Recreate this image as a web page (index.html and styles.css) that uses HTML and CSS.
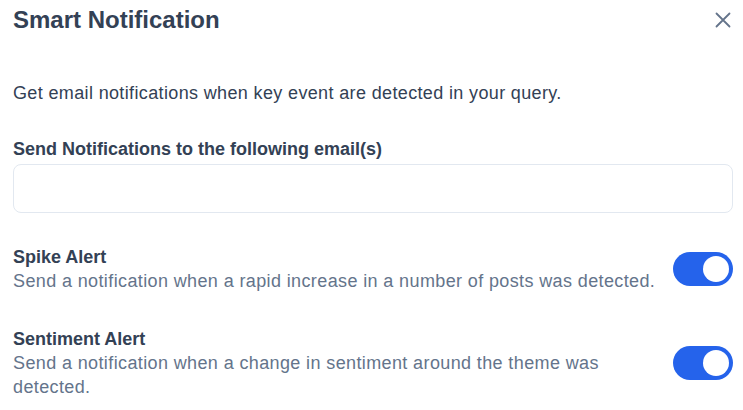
FILE: index.html
```html
<!doctype html>
<html>
<head>
<meta charset="utf-8">
<title>Smart Notification</title>
<link rel="stylesheet" href="styles.css">
</head>
<body>
<div class="modal">
	<div class="modal-header">
		<h2 class="modal-title">Smart Notification</h2>
		<button class="close-btn" type="button" aria-label="Close">
			<svg width="16" height="16" viewBox="0 0 16 16"><path d="M1.5 1.5 L14.5 14.5 M14.5 1.5 L1.5 14.5" stroke="#64748b" stroke-width="1.8" stroke-linecap="round" fill="none"/></svg>
		</button>
	</div>

	<p class="intro">Get email notifications when key event are detected in your query.</p>

	<label class="field-label" for="emails">Send Notifications to the following email(s)</label>
	<input class="email-input" type="text" id="emails">

	<div class="alert-row spike">
		<div class="alert-text">
			<div class="alert-title">Spike Alert</div>
			<div class="alert-desc">Send a notification when a rapid increase in a number of posts was detected.</div>
		</div>
		<span class="toggle on"><span class="knob"></span></span>
	</div>

	<div class="alert-row sentiment">
		<div class="alert-text">
			<div class="alert-title">Sentiment Alert</div>
			<div class="alert-desc">Send a notification when a change in sentiment around the theme was detected.</div>
		</div>
		<span class="toggle on"><span class="knob"></span></span>
	</div>
</div>
</body>
</html>
```

FILE: styles.css
```css
body {
	margin: 0;
	background: #fff;
}
.modal {
	padding: 4px 10px 0 13px;
	font-family: "Liberation Sans", Arial, sans-serif;
	color: #334155;
}
.modal-header {
	display: flex;
	justify-content: space-between;
	align-items: center;
	height: 32px;
}
.modal-title {
	margin: 0;
	font-size: 24px;
	line-height: 32px;
	font-weight: bold;
	color: #334155;
}
.close-btn {
	border: 0;
	background: none;
	padding: 0;
	margin-right: 2px;
	width: 16px;
	height: 16px;
	cursor: pointer;
}
.intro {
	margin: 45px 0 0;
	font-size: 18px;
	line-height: 24px;
	letter-spacing: 0.36px;
}
.field-label {
	display: block;
	margin: 32px 0 3px;
	font-size: 18px;
	line-height: 24px;
	font-weight: bold;
}
.email-input {
	display: block;
	box-sizing: border-box;
	width: 100%;
	height: 49px;
	border: 1px solid #e2e8f0;
	border-radius: 8px;
	outline: none;
}
.alert-row {
	display: flex;
	align-items: center;
	gap: 16px;
}
.alert-row.spike {
	margin-top: 32px;
}
.alert-row.sentiment {
	margin-top: 34px;
}
.alert-text {
	flex: 1;
	font-size: 18px;
	line-height: 24px;
}
.alert-title {
	font-weight: bold;
}
.alert-desc {
	color: #64748b;
	letter-spacing: 0.38px;
}
.toggle {
	flex: none;
	box-sizing: border-box;
	width: 60px;
	height: 34px;
	border-radius: 17px;
	background: #94a3b8;
	padding: 4px;
	display: flex;
}
.toggle.on {
	background: #2563eb;
	justify-content: flex-end;
}
.knob {
	width: 26px;
	height: 26px;
	border-radius: 50%;
	background: #fff;
}
```
